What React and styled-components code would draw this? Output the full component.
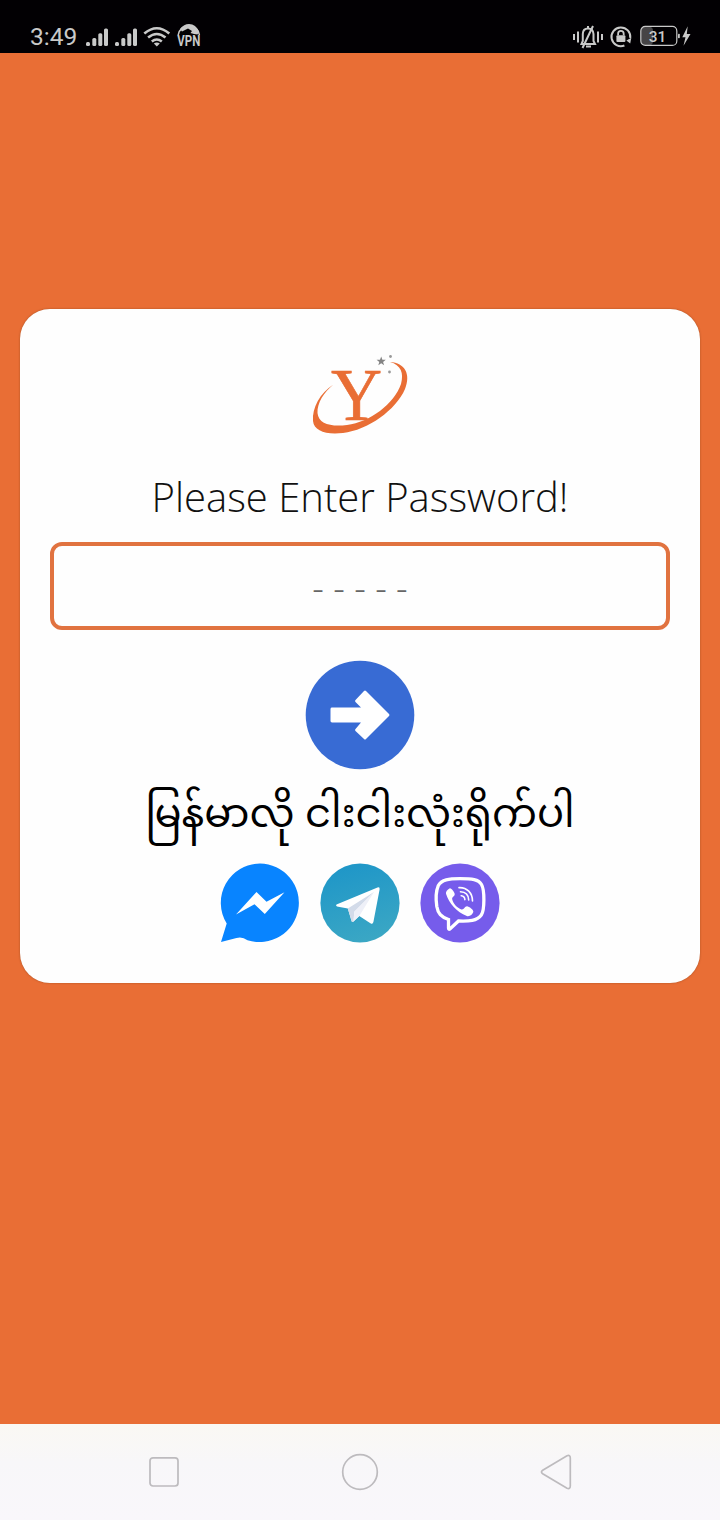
import React from "react";
import styled, { createGlobalStyle } from "styled-components";

const ORANGE = "#e96e35";

const GlobalStyle = createGlobalStyle`
  *, *::before, *::after { box-sizing: border-box; }
  body { margin: 0; background: ${ORANGE}; }
  svg { display: block; flex: none; overflow: visible; }
`;

const Screen = styled.div`
  display: flex;
  flex-direction: column;
  width: 720px;
  height: 1520px;
  background: ${ORANGE};
  overflow: hidden;
`;

const StatusBar = styled.header`
  display: flex;
  align-items: flex-start;
  justify-content: space-between;
  height: 53px;
  padding: 23px 28px 0 30px;
  background: #020003;
  color: #c9c9c9;
`;

const StatusGroup = styled.div`
  display: flex;
  align-items: center;
  height: 28px;
  gap: ${(p) => p.$gap}px;
`;

const Clock = styled.time`
  width: 50px;
  font: 400 24.5px/30px Roboto, sans-serif;
  white-space: nowrap;
`;

const Main = styled.main`
  flex: 1;
  padding: 256px 20px 0;
`;

const Card = styled.form`
  display: flex;
  flex-direction: column;
  align-items: center;
  height: 674px;
  padding: 41px 30px 0;
  border-radius: 30px;
  background: #fefefe;
  box-shadow: 0 0 2px rgba(90, 50, 20, 0.5);
`;

const Title = styled.h1`
  margin: 29px 0 0;
  height: 56px;
  font: 300 40px/56px "Open Sans", sans-serif;
  color: #111;
  white-space: nowrap;
`;

const PasswordField = styled.input`
  width: 620px;
  height: 88px;
  margin: 17px 0 0;
  padding: 2px 0 0;
  border: 4px solid #e17340;
  border-radius: 12px;
  outline: none;
  background: #fefefe;
  text-align: center;
  font: 300 36px "Open Sans", sans-serif;
  &::placeholder { color: #666; opacity: 1; }
`;

const RoundButton = styled.button`
  display: block;
  margin: 30px 0 0;
  padding: 0;
  border: 0;
  background: none;
`;

const Hint = styled.p`
  margin: 13px 0 0;
  height: 70px;
  font: 400 40px/70px "Noto Sans Myanmar", Padauk, "Myanmar Text", sans-serif;
  color: #000;
  white-space: nowrap;
`;

const Contacts = styled.div`
  display: flex;
  gap: 20px;
  margin-top: 10px;
`;

const NavBar = styled.nav`
  display: flex;
  align-items: center;
  justify-content: space-between;
  height: 96px;
  padding: 0 144px;
  background: linear-gradient(#faf8f3, #f8f7f9 40%, #f9f7fb);
`;

const Signal = () => (
  <svg width="23" height="18" viewBox="0 -0.5 23 18" fill="#c9c9c9">
    <rect x="0" y="13.5" width="4" height="4" rx="1.5" />
    <rect x="6.3" y="9.5" width="4" height="8" rx="1.5" />
    <rect x="12.3" y="4.7" width="4" height="12.8" rx="1.5" />
    <rect x="18" y="0" width="4" height="17.5" rx="1.5" />
  </svg>
);

const Wifi = () => (
  <svg width="27" height="22" viewBox="1.2 0 27 22" fill="none" stroke="#c9c9c9" strokeWidth="2.6">
    <path d="M1.5 7.5Q14 -3 26.5 7.5" />
    <path d="M5.3 11.5Q14 4.5 22.7 11.5" />
    <path d="M9 15.5Q14 11.5 19 15.5" />
    <path d="M11 17.5Q14 15.5 17 17.5L14 20.6Z" fill="#c9c9c9" stroke="none" />
  </svg>
);

const Vpn = () => (
  <svg width="26" height="30" viewBox="1 -1 26 30">
    <path d="M2.2 12A10.7 10.7 0 0 1 23.4 12" fill="none" stroke="#c9c9c9" strokeWidth="1.6" />
    <path d="M4 6Q8 1 13 1Q20 1 23 9L21.5 11.5L18 11L14.5 10L16 8L12 5.5L9 7L6 8.5Z" fill="#c9c9c9" />
    <text x="12.8" y="23.3" textAnchor="middle" textLength="23" lengthAdjust="spacingAndGlyphs" fontFamily="Roboto, sans-serif" fontSize="14" fontWeight="700" fill="#c9c9c9">VPN</text>
  </svg>
);

const Silent = () => (
  <svg width="30" height="26" viewBox="0 0 30 26" fill="none" stroke="#c9c9c9" strokeWidth="2">
    <path d="M1 10V16M5 7.5V18.5M25 7.5V18.5M29 10V16" />
    <path d="M8.5 20H22L20.5 17V10Q20 4.5 15 4.5Q10 4.5 9.8 10V17Z" />
    <path d="M15 2V4M13 22.5H18M20 2L9.5 24" />
  </svg>
);

const RotationLock = () => (
  <svg width="23" height="23" viewBox="0.6 0.8 23 23">
    <path d="M15 20.3A9.4 9.4 0 1 1 20.8 12.8" fill="none" stroke="#c9c9c9" strokeWidth="2" />
    <path d="M17 15.2L21.9 12.5L20.8 18.2Z" fill="#c9c9c9" />
    <rect x="7" y="10" width="9" height="6.8" rx="1" fill="#c9c9c9" />
    <path d="M8.7 10V8.5A2.8 2.8 0 0 1 14.3 8.5V10" fill="none" stroke="#c9c9c9" strokeWidth="1.8" />
  </svg>
);

const Battery = () => (
  <svg width="52" height="22" viewBox="0 0.8 52 22">
    <rect x="1" y="1.5" width="12" height="18.5" rx="4" fill="#464446" />
    <rect x="0.8" y="1.2" width="36" height="19" rx="4.5" fill="none" stroke="#c9c9c9" strokeWidth="1.2" />
    <rect x="38" y="8.5" width="1.8" height="4.5" rx="0.8" fill="#c9c9c9" />
    <path d="M47.7 1L42.3 12H45.5L43.5 20.5L50.5 8.8H46.8Z" fill="#c9c9c9" />
    <text x="17.5" y="16.4" textAnchor="middle" textLength="17.5" lengthAdjust="spacingAndGlyphs" fontFamily="Roboto, sans-serif" fontSize="15.5" fontWeight="500" fill="#c9c9c9">31</text>
  </svg>
);

const Logo = () => (
  <svg width="100" height="90" viewBox="0 0 100 90">
    <text x="46.5" y="70" textAnchor="middle" textLength="51" lengthAdjust="spacingAndGlyphs" fontFamily="Liberation Serif, serif" fontSize="75" fill={ORANGE} stroke={ORANGE} strokeWidth="0.6">Y</text>
    <path d="M23.5 34.5C10 43 2 58 3 71C4 81 16 85 33 83C58 80 86 60 95 39C101 24 95 13 80 12C91 15 94 23 91 34C84 54 60 72 37 75C21 77 8.5 74 7.5 63C7 53 14 42 23.5 34.5Z" fill={ORANGE} />
    <path d="M71.2 6.5L72.4 9.7L75.8 9.8L73.1 12L74.1 15.2L71.2 13.3L68.3 15.2L69.3 12L66.6 9.8L70 9.7Z" fill="#848484" />
    <circle cx="80.5" cy="6.5" r="1.4" fill="#999" />
    <circle cx="79.5" cy="22" r="1.4" fill="#999" />
  </svg>
);

const Arrow = () => (
  <svg width="110" height="110" viewBox="0 0 110 110">
    <circle cx="55" cy="55" r="54.3" fill="#386bd4" />
    <path d="M27 47.6H56L50.5 42Q49.5 41 50.5 40L59 31Q60 30 61 31L84 54Q85 55 84 56L61 79Q60 80 59 79L50.5 71Q49.5 70 50.5 69L56 62.4H27Q25.5 62.4 25.5 61V49Q25.5 47.6 27 47.6Z" fill="#fff" />
  </svg>
);

const Messenger = () => (
  <svg width="80" height="80" viewBox="0 0 80 80">
    <path d="M40 0.5A39.3 39.3 0 1 1 27.5 77.2Q22 73.2 16.5 75L1 79L6.7 60.5A39.3 39.3 0 0 1 40 0.5Z" fill="#0884ff" />
    <path d="M16 51.5L36.5 29L46.5 38.8L64.5 29.2L44.8 51L34.5 41.2Z" fill="#fff" />
  </svg>
);

const Telegram = () => (
  <svg width="80" height="80" viewBox="0 0 80 80">
    <defs>
      <linearGradient id="tg" x1="0.3" y1="0" x2="0.6" y2="1">
        <stop offset="0" stopColor="#1e96c8" />
        <stop offset="1" stopColor="#3ba7c4" />
      </linearGradient>
    </defs>
    <circle cx="40" cy="40" r="39.6" fill="url(#tg)" />
    <path d="M16.5 41.5L57.5 24.4Q60 23.4 59.6 26.5L53.4 59Q52.8 61.8 50.4 60.2L39.3 53L33.5 58.5Q32 59.8 31.5 57.8L27.8 45.5L17 43.5Q15.3 42.5 16.5 41.5Z" fill="#fff" />
    <path d="M27.8 45.5L54 29L34.3 48.7L33.5 58.5Q32 59.8 31.5 57.8Z" fill="#d3dbe9" />
    <path d="M34.3 48.7L54 29L39.3 53L33.5 58.5Z" fill="#eef0f8" />
  </svg>
);

const Viber = () => (
  <svg width="80" height="80" viewBox="0 0 80 80">
    <circle cx="40" cy="40" r="39.6" fill="#765ceb" />
    <path d="M40 15.7C52 15.7 58.5 16.3 61.5 21.5C64.7 27 64.7 47 61.3 52C57 58 49 58.4 38.5 58L30 66Q28.5 66.8 28.5 65V56.5C21 54 18 50.5 16.8 43.5C15.7 36 16 28 18.2 22.8C21.5 16.5 29 15.7 40 15.7Z" fill="none" stroke="#fff" strokeWidth="3.3" />
    <path d="M29.5 25.5C31 24.5 35 29.5 34.7 31.5C34.5 33.5 31.8 33.8 32.2 36.3C33.2 41 37 44.8 41.5 46.4C44 47 44.5 43.2 47 43.2C49 43.2 54 47 53.3 49C52.5 51.5 49.5 54 46.8 53C36.7 49 29 40.5 26 30.8C25.5 28.5 27.5 26.5 29.5 25.5Z" fill="#fff" />
    <path d="M39 24.6C47 24.2 52.5 30 52.5 38M40.5 28.8C45.5 29 48.5 32 48.7 37M41.2 32.8C43.5 33 44.7 34.2 44.9 36.6" fill="none" stroke="#fff" strokeWidth="1.6" strokeLinecap="round" />
  </svg>
);

const NavIcon = ({ children }) => (
  <svg width="40" height="40" viewBox="0 0 40 40" fill="none" stroke="#bdbbbe" strokeWidth="1.7">{children}</svg>
);

export default function App() {
  return (
    <Screen>
      <GlobalStyle />
      <StatusBar>
        <StatusGroup $gap={6}>
          <Clock>3:49</Clock>
          <Signal />
          <Signal />
          <Wifi />
          <Vpn />
        </StatusGroup>
        <StatusGroup $gap={7}>
          <Silent />
          <RotationLock />
          <Battery />
        </StatusGroup>
      </StatusBar>
      <Main>
        <Card>
          <Logo />
          <Title>Please Enter Password!</Title>
          <PasswordField placeholder="- - - - -" aria-label="Password" />
          <RoundButton type="button" aria-label="Submit"><Arrow /></RoundButton>
          <Hint lang="my">မြန်မာလို ငါးငါးလုံးရိုက်ပါ</Hint>
          <Contacts>
            <Messenger />
            <Telegram />
            <Viber />
          </Contacts>
        </Card>
      </Main>
      <NavBar>
        <NavIcon><rect x="6" y="5.8" width="28" height="28.2" rx="3" /></NavIcon>
        <NavIcon><circle cx="20" cy="20" r="17.3" /></NavIcon>
        <NavIcon><path d="M6.7 18.2L31 3.8Q34.3 2.5 34.3 6V34Q34.3 37.5 31 36.2L6.7 21.8Q4.2 20 6.7 18.2Z" /></NavIcon>
      </NavBar>
    </Screen>
  );
}
